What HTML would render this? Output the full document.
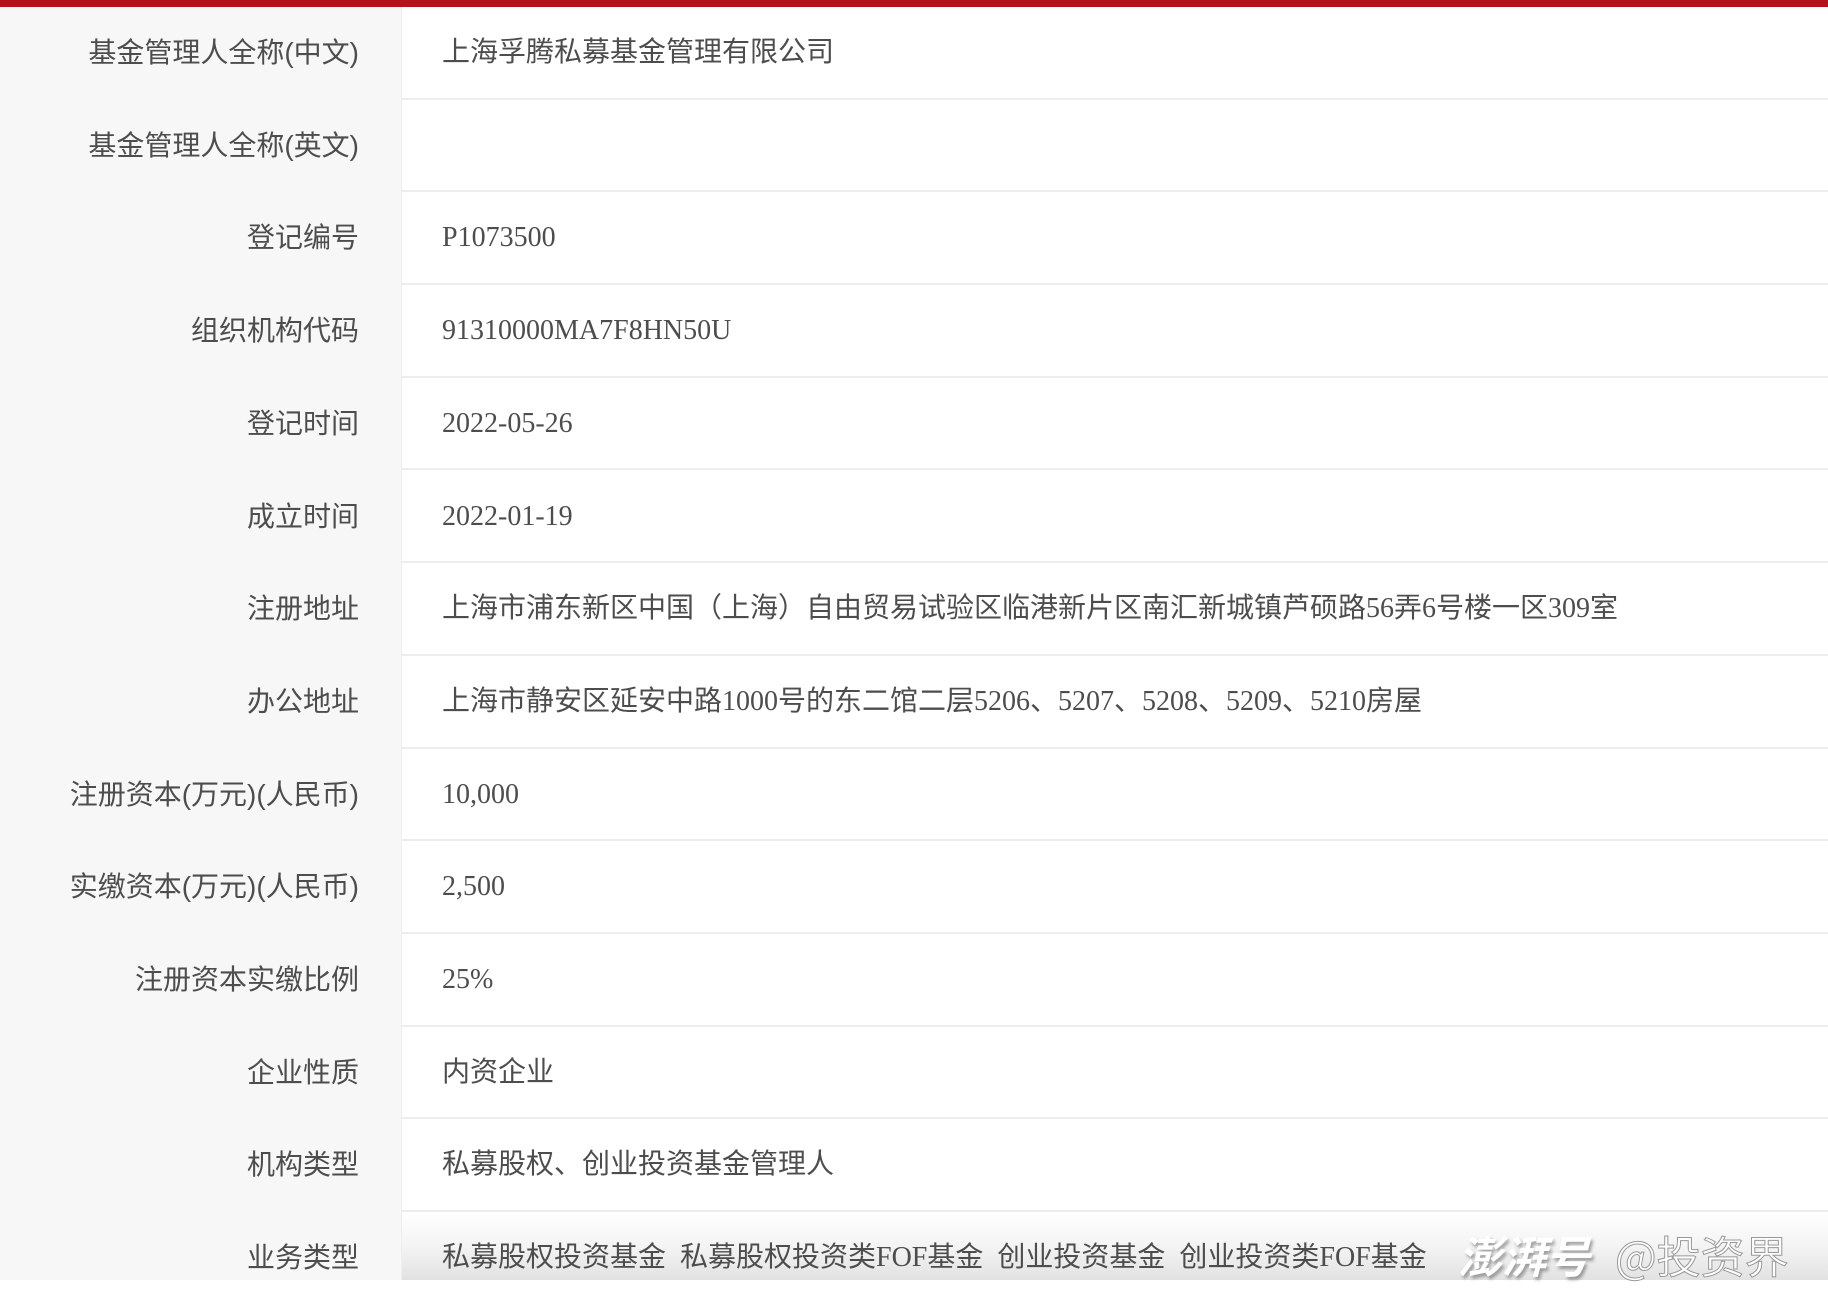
<!DOCTYPE html>
<html><head><meta charset="utf-8"><style>
html,body{margin:0;padding:0;}
body{width:1828px;height:1280px;overflow:hidden;background:#fff;position:relative;font-family:"Liberation Serif","Noto Sans CJK SC",serif;color:#4d4d4d;}
.bar{position:absolute;left:0;top:0;width:1828px;height:7px;background:#b3121c;}
.left{position:absolute;left:0;top:7px;width:401px;height:1273px;background:#f7f7f7;border-right:1px solid #eee;}
.row{position:absolute;left:0;width:1828px;height:92.7px;}
.lab{position:absolute;right:1469px;top:0;height:92.7px;line-height:92.7px;font-size:28px;white-space:nowrap;font-family:"Liberation Sans","Noto Sans CJK SC",sans-serif;}
.val{position:absolute;left:442px;top:0;height:92.7px;line-height:92.7px;font-size:28px;white-space:nowrap;}
.line{position:absolute;left:402px;right:0;bottom:0;height:2px;background:#ededed;}
.wm{position:absolute;left:1458px;top:1222px;font-size:44px;color:#fff;font-style:italic;font-weight:bold;font-family:"Noto Sans CJK SC",sans-serif;text-shadow:2px 3px 3px rgba(0,0,0,.35);white-space:nowrap;}
.wm2{position:absolute;left:1615px;top:1222px;font-size:44px;color:#fff;font-family:"Noto Sans CJK SC",sans-serif;-webkit-text-stroke:1px #999;white-space:nowrap;}
</style></head><body>
<div class="bar"></div>
<div class="left"></div>
<div style="position:absolute;left:402px;top:1212px;width:1426px;height:68px;background:linear-gradient(#fff,#f4f4f4 50%,#e2e2e2);"></div>

<div class="row" style="top:7px"><div class="lab">基金管理人全称(中文)</div><div class="val">上海孚腾私募基金管理有限公司</div><div class="line"></div></div>
<div class="row" style="top:99.7px"><div class="lab">基金管理人全称(英文)</div><div class="val"></div><div class="line"></div></div>
<div class="row" style="top:192.4px"><div class="lab">登记编号</div><div class="val">P1073500</div><div class="line"></div></div>
<div class="row" style="top:285.1px"><div class="lab">组织机构代码</div><div class="val">91310000MA7F8HN50U</div><div class="line"></div></div>
<div class="row" style="top:377.8px"><div class="lab">登记时间</div><div class="val">2022-05-26</div><div class="line"></div></div>
<div class="row" style="top:470.5px"><div class="lab">成立时间</div><div class="val">2022-01-19</div><div class="line"></div></div>
<div class="row" style="top:563.2px"><div class="lab">注册地址</div><div class="val">上海市浦东新区中国（上海）自由贸易试验区临港新片区南汇新城镇芦硕路56弄6号楼一区309室</div><div class="line"></div></div>
<div class="row" style="top:655.9px"><div class="lab">办公地址</div><div class="val">上海市静安区延安中路1000号的东二馆二层5206、5207、5208、5209、5210房屋</div><div class="line"></div></div>
<div class="row" style="top:748.6px"><div class="lab">注册资本(万元)(人民币)</div><div class="val">10,000</div><div class="line"></div></div>
<div class="row" style="top:841.3px"><div class="lab">实缴资本(万元)(人民币)</div><div class="val">2,500</div><div class="line"></div></div>
<div class="row" style="top:934px"><div class="lab">注册资本实缴比例</div><div class="val">25%</div><div class="line"></div></div>
<div class="row" style="top:1026.7px"><div class="lab">企业性质</div><div class="val">内资企业</div><div class="line"></div></div>
<div class="row" style="top:1119.4px"><div class="lab">机构类型</div><div class="val">私募股权、创业投资基金管理人</div><div class="line"></div></div>
<div class="row" style="top:1212.1px"><div class="lab">业务类型</div><div class="val">私募股权投资基金&nbsp; 私募股权投资类FOF基金&nbsp; 创业投资基金&nbsp; 创业投资类FOF基金</div></div>

<div class="wm">澎湃号</div>
<div class="wm2">@投资界</div>
</body></html>
